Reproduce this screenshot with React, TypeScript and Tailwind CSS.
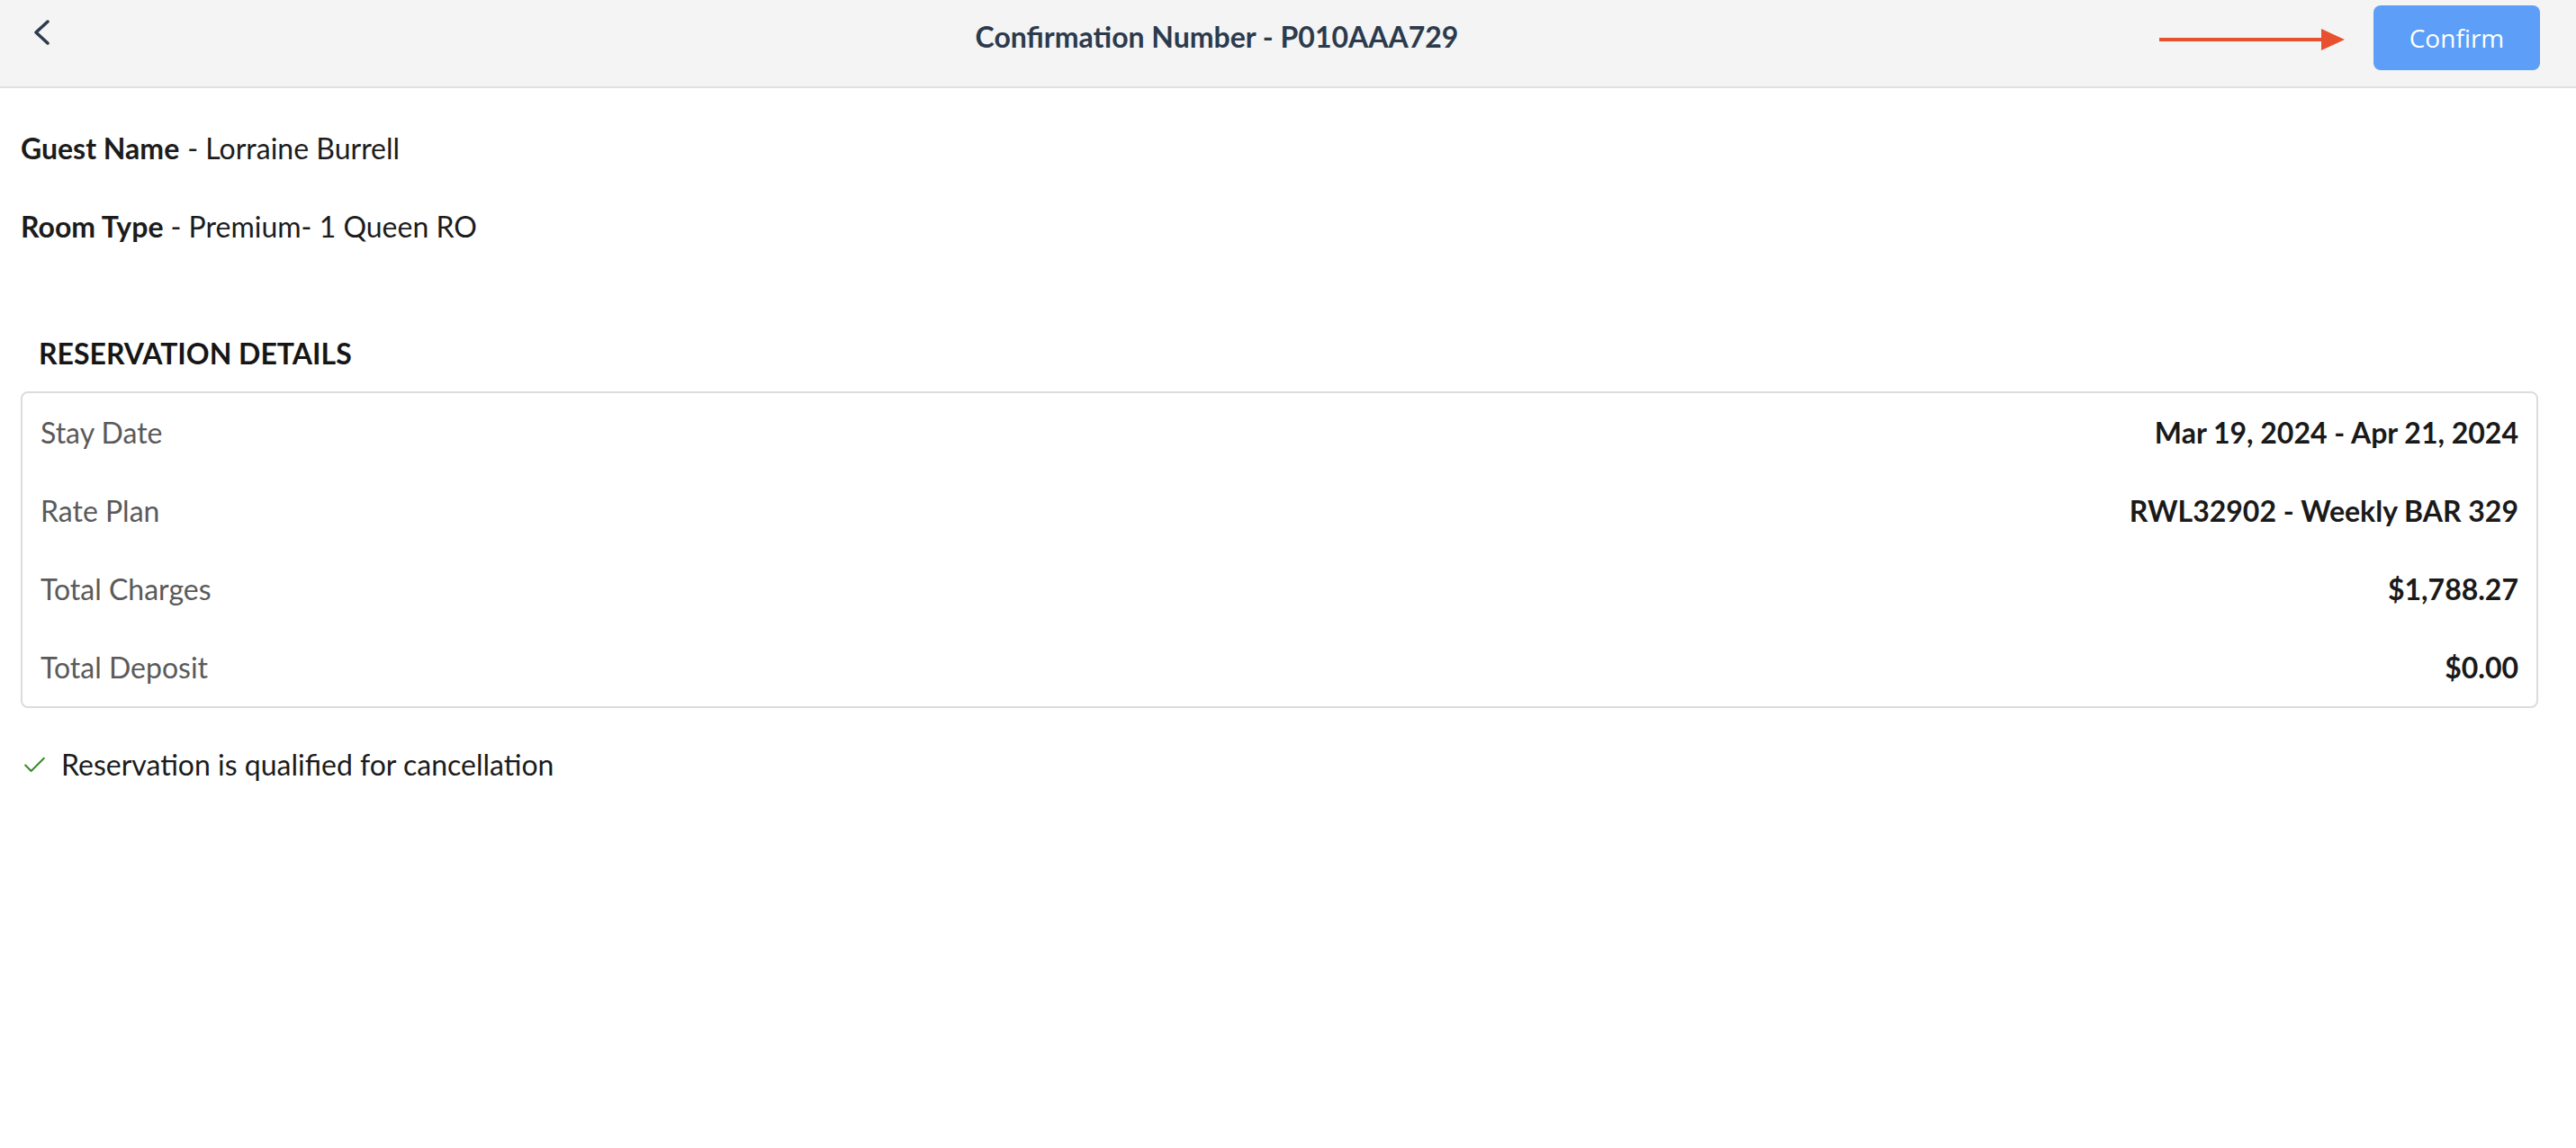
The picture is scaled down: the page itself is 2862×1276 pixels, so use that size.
import { Check } from 'lucide-react';

const details = [
    { label: 'Stay Date', value: 'Mar 19, 2024 - Apr 21, 2024' },
    { label: 'Rate Plan', value: 'RWL32902 - Weekly BAR 329' },
    { label: 'Total Charges', value: '$1,788.27' },
    { label: 'Total Deposit', value: '$0.00' },
];

export default function App() {
    return (
        <div className="min-h-screen bg-white font-['Lato',_'Liberation_Sans',_sans-serif]">
            {/* Header */}
            <header className="h-[98px] bg-[#f4f4f4] border-b-2 border-[#e1e1e1] flex items-start pl-[37px] pr-[40px]">
                <button className="mt-[22px] w-[18px] h-[28px] text-[#2d3b4e]">
                    <svg width="18" height="28" viewBox="0 0 18 28" fill="none">
                        <path d="M16 2 3 14l13 12" stroke="currentColor" strokeWidth="3.5" strokeLinecap="round" strokeLinejoin="round" />
                    </svg>
                </button>
                <div className="flex-1 flex justify-center pl-[250px] pt-[22px]">
                    <h1 className="text-[32px] leading-[38px] font-bold text-[#2c3a4d]">
                        Confirmation Number - P010AAA729
                    </h1>
                </div>
                <div className="flex items-start">
                    {/* annotation arrow */}
                    <svg className="mt-[31px] mr-[32px]" width="206" height="26" viewBox="0 0 206 26">
                        <line x1="0" y1="13" x2="184" y2="13" stroke="#e8512f" strokeWidth="4" />
                        <path d="M180 1 206 13 180 25z" fill="#e8512f" />
                    </svg>
                    <button className="mt-[6px] w-[185px] h-[72px] rounded-[8px] bg-[#5c9ef8] text-white text-[28px] font-['Open_Sans',_sans-serif]">
                        Confirm
                    </button>
                </div>
            </header>

            <main className="pl-[23px] pr-[42px]">
                <div className="mt-[48px] text-[32px] leading-[38px] text-[#1c1c1c]">
                    <span className="font-bold">Guest Name</span>
                    <span className="ml-[9px]">- Lorraine Burrell</span>
                </div>
                <div className="mt-[49px] text-[32px] leading-[38px] text-[#1c1c1c]">
                    <span className="font-bold">Room Type</span>
                    <span className="ml-[8px]">- Premium- 1 Queen RO</span>
                </div>

                {/* Reservation details */}
                <h2 className="mt-[103px] ml-[20px] text-[32px] leading-[38px] font-bold text-[#161616]">
                    RESERVATION DETAILS
                </h2>
                <div className="mt-[23px] border-2 border-[#dcdcdc] rounded-[8px] px-[20px]">
                    {details.map((row) => (
                        <div key={row.label} className="h-[87px] flex items-center justify-between text-[32px] leading-[38px]">
                            <span className="text-[#5a5a5a]">{row.label}</span>
                            <span className="font-bold text-[#1a1a1a]">{row.value}</span>
                        </div>
                    ))}
                </div>

                <div className="mt-[44px] flex items-center text-[32px] leading-[38px] text-[#1c1c1c]">
                    <Check className="w-[31px] h-[31px] text-[#3a8a2e] mr-[14px]" strokeWidth={1.6} />
                    <span>Reservation is qualified for cancellation</span>
                </div>
            </main>
        </div>
    );
}
